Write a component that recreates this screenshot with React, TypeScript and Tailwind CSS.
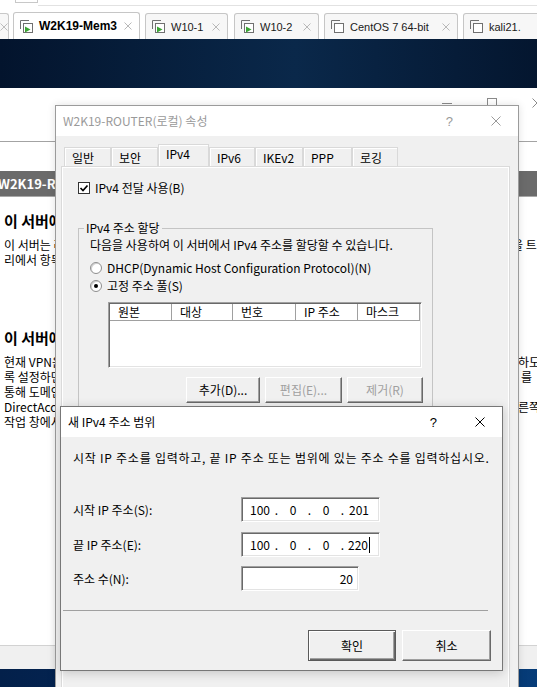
import React from "react";

function XGlyph({ color, size }: { color: string; size: number }) {
  const e = size - 0.5;
  return (
    <svg width={size} height={size} viewBox={`0 0 ${size} ${size}`} className="block shrink-0">
      <path d={`M0.5 0.5L${e} ${e}M${e} 0.5L0.5 ${e}`} stroke={color} strokeWidth="1" fill="none" />
    </svg>
  );
}

function VmIcon({ running }: { running: boolean }) {
  return (
    <svg width="13" height="13" viewBox="0 0 13 13" className="block shrink-0">
      <path d="M0.5 9V0.5H9" fill="none" stroke="#707070" />
      <rect x="3.5" y="3.5" width="9" height="9" fill="#fff" stroke="#707070" />
      {running && <path d="M5 6.5L5 12.5L10.5 9.5Z" fill="#3ba534" />}
    </svg>
  );
}

type Tab = { label: string; w: string; ml: string; active?: boolean; running: boolean };

const vmTabs: Tab[] = [
  { label: "W2K19-Mem3", w: "w-[127px]", ml: "ml-[4px]", active: true, running: true },
  { label: "W10-1", w: "w-[83px]", ml: "ml-[5px]", running: true },
  { label: "W10-2", w: "w-[85px]", ml: "ml-[6px]", running: true },
  { label: "CentOS 7 64-bit", w: "w-[134px]", ml: "ml-[5px]", running: false },
  { label: "kali21.", w: "w-[100px]", ml: "ml-[5px]", running: false },
];

function TabStrip() {
  return (
    <div className="h-[39px] bg-white flex flex-col font-['Liberation_Sans',sans-serif]">
      <div className="h-[12px] flex">
        <div className="w-[15px]" />
        <div className="w-[23px] h-[3px] border-l border-r border-b border-[#c8c8c8]" />
        <div className="flex-1 h-[6px] border-b border-[#e2e2e2]" />
      </div>
      <div className="h-[27px] flex items-end">
        <div className="w-[14px] h-[26px] border-t border-r border-[#c8c8c8] rounded-tr-[3px] bg-[#f7f7f7] flex items-center">
          <XGlyph color="#bdbdbd" size={8} />
        </div>
        {vmTabs.map((t) => (
          <div
            key={t.label}
            className={`${t.w} ${t.ml} shrink-0 flex items-center rounded-t-[3px] border border-b-0 border-[#c6c6c6] pl-[6px] pr-[7px] ${
              t.active ? "h-[27px] bg-white" : "h-[26px] bg-[#f7f7f7]"
            }`}
          >
            <VmIcon running={t.running} />
            <span
              className={`ml-[6px] whitespace-nowrap ${
                t.active ? "text-[12px] font-bold text-black" : "text-[11px] text-[#1a1a1a]"
              }`}
            >
              {t.label}
            </span>
            <span className="ml-auto">
              <XGlyph color="#b8b8b8" size={8} />
            </span>
          </div>
        ))}
      </div>
    </div>
  );
}

type Row = { left: string; right?: string; rightCls?: string };

function TextRow({ left, right, rightCls }: Row) {
  return (
    <div className="flex h-[15px] leading-[15px] text-[12px] whitespace-nowrap">
      <div className="w-[518px] shrink-0 overflow-hidden pl-[4px]">{left}</div>
      <div className={`overflow-hidden ${rightCls ?? ""}`}>{right}</div>
    </div>
  );
}

function RrasWindow() {
  return (
    <div className="h-[557px] bg-white flex flex-col overflow-hidden">
      <div className="h-[54px] shrink-0 border-b border-[#a3a3a3] flex items-start pt-[10px] overflow-hidden">
        <div className="w-[442px] shrink-0" />
        <div className="w-[10px] h-px shrink-0 bg-[#8a8a8a] mt-[5px]" />
        <div className="ml-[35px] w-[10px] h-[10px] shrink-0 border border-[#8a8a8a]" />
        <div className="ml-[35px] shrink-0">
          <XGlyph color="#8a8a8a" size={10} />
        </div>
      </div>
      <div className="h-[29px] shrink-0" />
      <div className="h-[26px] shrink-0 bg-[#6b6b6b] border-b border-[#a8a8a8] flex items-center">
        <span className="ml-[-2px] text-white font-bold text-[13px] whitespace-nowrap">W2K19-ROUTER(로컬)</span>
      </div>
      <div className="mt-[14px] h-[20px] leading-[20px] text-[15px] font-bold pl-[4px] whitespace-nowrap">
        이 서버에 대한 정보
      </div>
      <div className="mt-[6px]">
        <TextRow left="이 서버는 라우팅 및 원격 액세스 서버로 구성되어 있으며 네트워크" right="을 트래픽" rightCls="ml-[-6px]" />
        <TextRow left="리에서 항목을 선택하여 서버를 관리할 수 있습니다." />
      </div>
      <div className="mt-[61px] h-[20px] leading-[20px] text-[15px] font-bold pl-[4px] whitespace-nowrap">
        이 서버에서 원격 액세스 구성
      </div>
      <div className="mt-[6px]">
        <TextRow left="현재 VPN은 사용하도록 설정되어 있습니다. 원격 클라이언트가 연결" right="하도록" />
        <TextRow left="록 설정하면 원격 클라이언트가 사용자 인증을 통해 회사 네트워크" right="를" rightCls="pl-[3px]" />
        <TextRow left="통해 도메인에 연결할 수 있습니다." />
        <TextRow left="DirectAccess를 사용하도록 설정하려면 오른쪽 작업 창에서 오" right="른쪽" />
        <TextRow left="작업 창에서 원격 액세스 관리를 클릭하십시오." />
      </div>
    </div>
  );
}

const raised =
  "border border-t-white border-l-white border-b-[#696969] border-r-[#696969] shadow-[inset_-1px_-1px_0_#a0a0a0] bg-[#f0f0f0]";
const sunken =
  "border border-t-[#a0a0a0] border-l-[#a0a0a0] border-b-white border-r-white shadow-[inset_1px_1px_0_#696969,inset_-1px_-1px_0_#e3e3e3] bg-white";

type PTab = { label: string; w: string; sel?: boolean };
const propTabs: PTab[] = [
  { label: "일반", w: "w-[47px]" },
  { label: "보안", w: "w-[47px]" },
  { label: "IPv4", w: "w-[51px]", sel: true },
  { label: "IPv6", w: "w-[46px]" },
  { label: "IKEv2", w: "w-[48px]" },
  { label: "PPP", w: "w-[49px]" },
  { label: "로깅", w: "w-[46px]" },
];

const cols = [
  { label: "원본", w: "w-[62px]" },
  { label: "대상", w: "w-[61px]" },
  { label: "번호", w: "w-[63px]" },
  { label: "IP 주소", w: "w-[62px]" },
  { label: "마스크", w: "w-[62px]" },
];

function Radio({ checked }: { checked?: boolean }) {
  return (
    <span className="w-[12px] h-[12px] rounded-full border border-[#8e8e8e] bg-white flex items-center justify-center shrink-0 shadow-[inset_1px_1px_0_#d0d0d0]">
      {checked && <span className="w-[4px] h-[4px] rounded-full bg-black" />}
    </span>
  );
}

function PropertiesDialog() {
  return (
    <div className="absolute left-[55px] top-[105px] w-[464px] h-[600px] border border-[#9b9b9b] bg-[#f0f0f0] shadow-[0_0_8px_rgba(0,0,0,0.12)] flex flex-col">
      <div className="h-[30px] bg-white flex items-center pl-[7px] shrink-0">
        <span className="text-[#9a9a9a] text-[12px] whitespace-nowrap">W2K19-ROUTER(로컬) 속성</span>
        <span className="ml-auto text-[#9a9a9a] text-[13px] font-['Liberation_Sans',sans-serif] leading-none">?</span>
        <span className="ml-[38px] mr-[17px]">
          <XGlyph color="#9a9a9a" size={10} />
        </span>
      </div>
      <div className="mt-[8px] h-[23px] flex items-end pl-[8px] shrink-0">
        {propTabs.map((t) => (
          <div
            key={t.label}
            className={`${t.w} shrink-0 flex items-center pl-[7px] text-[12px] border-t border-l border-r border-[#d9d9d9] ${
              t.sel ? "h-[23px] pb-[4px] bg-[#f0f0f0] shadow-[inset_1px_1px_0_#fff]" : "h-[20px] bg-[#f0f0f0] shadow-[inset_1px_1px_0_#fff]"
            }`}
          >
            {t.label}
          </div>
        ))}
      </div>
      <div className="ml-[6px] w-[447px] h-[540px] border border-white shadow-[0_0_0_1px_#dadada] shrink-0">
        <div className="mt-[14px] ml-[15px] flex items-center h-[12px]">
          <span className="w-[12px] h-[12px] border border-[#333] bg-white flex items-center justify-center shrink-0">
            <svg width="10" height="10" viewBox="0 0 10 10" className="block">
              <path d="M1.5 5L4 7.5L8.5 2.5" stroke="#000" strokeWidth="1.7" fill="none" />
            </svg>
          </span>
          <span className="ml-[5px] text-[12px] whitespace-nowrap">IPv4 전달 사용(B)</span>
        </div>
        <fieldset className="mt-[26px] ml-[15px] w-[355px] h-[230px] border border-[#c4c4c4]">
          <legend className="ml-[5px] px-[2px] leading-[16px] text-[12px]">IPv4 주소 할당</legend>
          <div className="pl-[11px]">
            <div className="mt-[1px] leading-[16px] whitespace-nowrap">
              다음을 사용하여 이 서버에서 IPv4 주소를 할당할 수 있습니다.
            </div>
            <div className="mt-[7px] h-[16px] flex items-center">
              <Radio />
              <span className="ml-[5px] whitespace-nowrap">DHCP(Dynamic Host Configuration Protocol)(N)</span>
            </div>
            <div className="mt-[2px] h-[16px] flex items-center">
              <Radio checked />
              <span className="ml-[5px] whitespace-nowrap">고정 주소 풀(S)</span>
            </div>
            <div className={`mt-[8px] ml-[18px] w-[314px] h-[66px] ${sunken}`}>
              <div className="flex h-[17px] mt-[1px] ml-[1px]">
                {cols.map((c) => (
                  <div
                    key={c.label}
                    className={`${c.w} shrink-0 h-[17px] flex items-center pl-[8px] border-r border-b border-[#a0a0a0] shadow-[inset_-1px_0_0_#fff] text-[12px] whitespace-nowrap`}
                  >
                    {c.label}
                  </div>
                ))}
              </div>
            </div>
            <div className="mt-[9px] ml-[96px] flex gap-[5px]">
              <div className={`w-[74px] h-[26px] flex items-center justify-center ${raised}`}>추가(D)...</div>
              <div className={`w-[77px] h-[26px] flex items-center justify-center text-[#a0a0a0] ${raised}`}>편집(E)...</div>
              <div className={`w-[76px] h-[26px] flex items-center justify-center text-[#a0a0a0] ${raised}`}>제거(R)</div>
            </div>
          </div>
        </fieldset>
      </div>
    </div>
  );
}

function IpBox({ parts, cursor }: { parts: string[]; cursor?: boolean }) {
  return (
    <div className={`w-[139px] h-[25px] ${sunken} flex items-center pl-[5px] text-[12px]`}>
      {parts.map((p, i) => (
        <React.Fragment key={i}>
          <span className="w-[26px] flex items-center justify-center">
            <span>{p}</span>
            {cursor && i === 3 && <span className="ml-[1px] w-px h-[16px] bg-black" />}
          </span>
          {i < 3 && <span className="w-[7px] text-center">.</span>}
        </React.Fragment>
      ))}
    </div>
  );
}

function NewRangeDialog() {
  return (
    <div className="absolute left-[60px] top-[406px] w-[443px] h-[265px] border border-[#777] bg-[#f0f0f0] shadow-[0_2px_10px_rgba(0,0,0,0.18)] flex flex-col">
      <div className="h-[30px] bg-white flex items-center pl-[7px] shrink-0">
        <span className="text-black text-[12px] whitespace-nowrap">새 IPv4 주소 범위</span>
        <span className="ml-auto text-black text-[13px] font-['Liberation_Sans',sans-serif] leading-none">?</span>
        <span className="ml-[38px] mr-[17px]">
          <XGlyph color="#000" size={10} />
        </span>
      </div>
      <div className="mt-[13px] pl-[12px] leading-[16px] text-[12px] tracking-[0.75px] whitespace-nowrap">
        시작 IP 주소를 입력하고, 끝 IP 주소 또는 범위에 있는 주소 수를 입력하십시오.
      </div>
      <div className="mt-[31px] pl-[12px] flex items-center">
        <span className="w-[168px] shrink-0">시작 IP 주소(S):</span>
        <IpBox parts={["100", "0", "0", "201"]} />
      </div>
      <div className="mt-[10px] pl-[12px] flex items-center">
        <span className="w-[168px] shrink-0">끝 IP 주소(E):</span>
        <IpBox parts={["100", "0", "0", "220"]} cursor />
      </div>
      <div className="mt-[9px] pl-[12px] flex items-center">
        <span className="w-[168px] shrink-0">주소 수(N):</span>
        <div className={`w-[118px] h-[25px] ${sunken} flex items-center justify-end pr-[5px]`}>20</div>
      </div>
      <div className="mt-[19px] ml-[2px] w-[425px] h-0 border-t border-[#a0a0a0]" />
      <div className="mt-[19px] flex justify-end gap-[6px] pr-[11px]">
        <div className="w-[88px] h-[31px] flex items-center justify-center border border-[#5a5a5a] bg-[#f0f0f0] shadow-[inset_1px_1px_0_#fff,inset_-1px_-1px_0_#696969,inset_-2px_-2px_0_#a0a0a0]">
          확인
        </div>
        <div className={`w-[89px] h-[31px] flex items-center justify-center ${raised}`}>취소</div>
      </div>
    </div>
  );
}

export default function App() {
  return (
    <div className="relative w-[537px] h-[687px] overflow-hidden bg-white text-black text-[12px] leading-[16px] font-['Noto_Sans_CJK_KR',sans-serif]">
      <TabStrip />
      <div className="h-[49px] bg-[linear-gradient(90deg,#03142d_0%,#0a284a_55%,#04162f_100%)]" />
      <RrasWindow />
      <div className="h-[24px] border-t border-[#d2d2d2] bg-[#f0f0f0]" />
      <div className="h-[18px] bg-[linear-gradient(90deg,#03204a_0%,#05306a_60%,#063c78_100%)]" />
      <PropertiesDialog />
      <NewRangeDialog />
    </div>
  );
}
